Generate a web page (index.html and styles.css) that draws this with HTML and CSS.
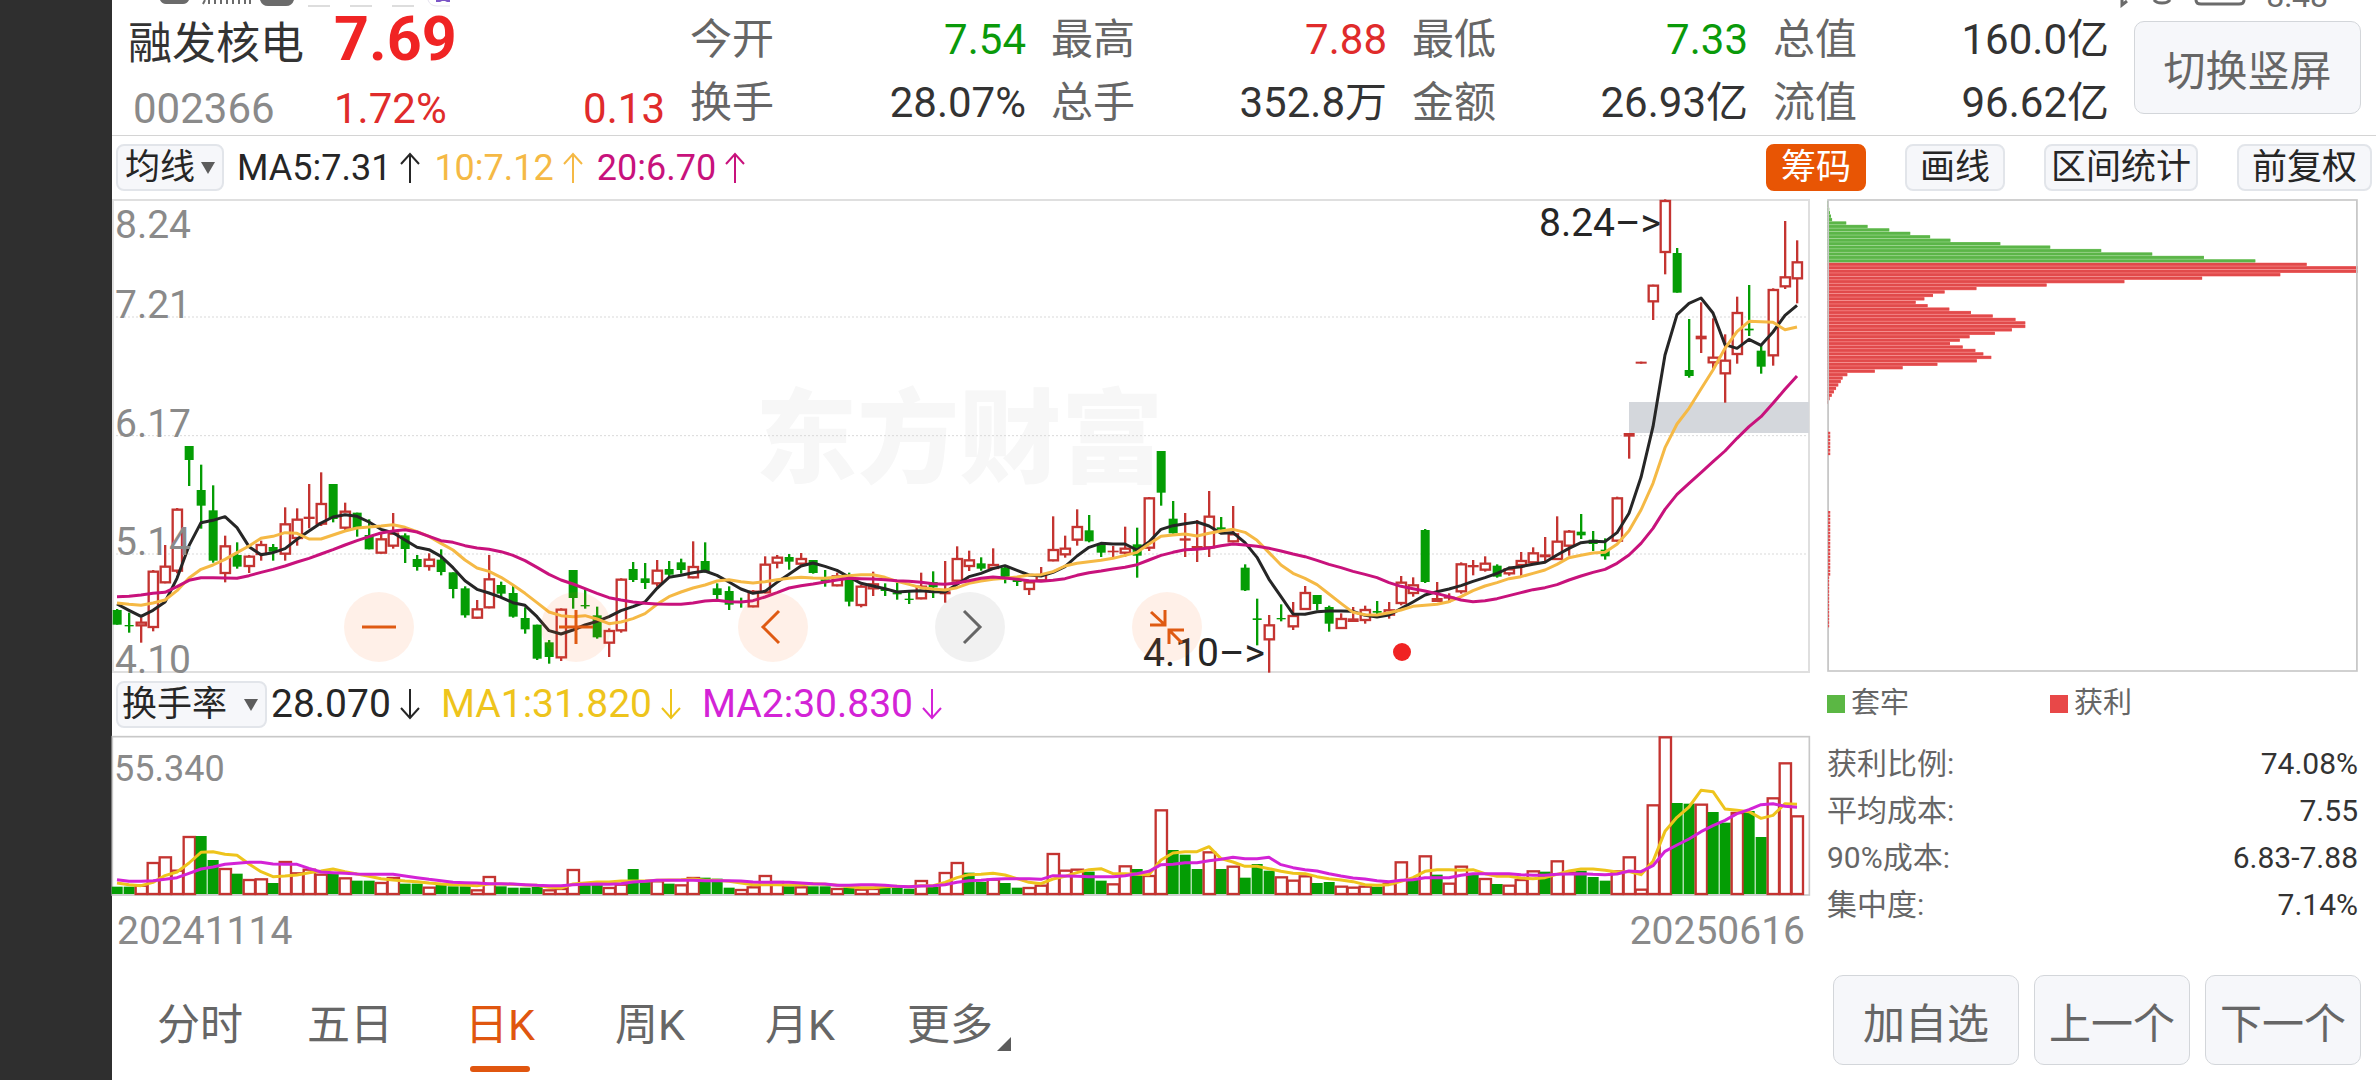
FILE: index.html
```html
<!DOCTYPE html>
<html lang="zh-CN">

<head>
    <meta charset="UTF-8">
    <meta name="viewport" content="width=device-width, initial-scale=1.0">
    <title>融发核电 002366</title>
    <link rel="stylesheet" href="styles.css">
</head>

<body>
    <div class="page">
        <!-- Phone status strip, mostly scrolled off -->
        <div class="status" aria-hidden="true">
            <svg class="status-left" viewBox="0 0 200 8">
                <path d="M0 0h29q-2 4-6 4h-17q-4 0-6-4z" fill="#6b6b6b" />
                <path d="M45 0l-2 4M49 0v4M55 0v4M61 0v4M67 0v4M73 0v4M79 0v4M85 0v4M90 0v4" stroke="#6b6b6b" stroke-width="2" fill="none" />
                <path d="M100 0h34q-2 6-8 6h-18q-6 0-8-6z" fill="#6b6b6b" />
                <path d="M148 6h22M190 6h10" stroke="#dddddd" stroke-width="2" />
            </svg>
            <svg class="status-app" viewBox="0 0 90 8">
                <path d="M0 6h12M32 6h22" stroke="#dddddd" stroke-width="2" />
                <path d="M68 0q2 6 9 6h13" stroke="#e6e3ee" stroke-width="1" fill="none" />
                <path d="M76 0h14v2h-3l-2-1h-3l-2 1h-4z" fill="#7b55c7" />
            </svg>
            <svg class="status-right" viewBox="0 0 126 8">
                <path d="M2 0v5l5-4M34 0q2 3 8 3q6 0 8-3M76 0q0 4 5 4h38q5 0 5-4" stroke="#6b6b6b" stroke-width="3" fill="none" />
            </svg>
            <span class="status-time">8:48</span>
        </div>

        <!-- Quote header -->
        <header class="quote">
            <div class="stock">
                <h1 class="stock-name">融发核电</h1>
                <span class="stock-price">7.69</span>
                <span class="stock-code">002366</span>
                <span class="stock-change"><span>1.72%</span><span>0.13</span></span>
            </div>
            <dl class="quote-col">
                <div><dt>今开</dt><dd class="down">7.54</dd></div>
                <div><dt>换手</dt><dd>28.07%</dd></div>
            </dl>
            <dl class="quote-col">
                <div><dt>最高</dt><dd class="up">7.88</dd></div>
                <div><dt>总手</dt><dd>352.8万</dd></div>
            </dl>
            <dl class="quote-col">
                <div><dt>最低</dt><dd class="down">7.33</dd></div>
                <div><dt>金额</dt><dd>26.93亿</dd></div>
            </dl>
            <dl class="quote-col">
                <div><dt>总值</dt><dd>160.0亿</dd></div>
                <div><dt>流值</dt><dd>96.62亿</dd></div>
            </dl>
            <button class="btn btn-rotate" type="button">切换竖屏</button>
        </header>

        <!-- Moving averages and chart tools -->
        <div class="toolbar">
            <label class="picker picker-ma">
                <select aria-label="主图指标">
                    <option>均线</option>
                </select>
            </label>
            <div class="readout">
                <span class="ma5">MA5:7.31<svg class="arrow" viewBox="0 0 20 32"><path d="M10 31V2M1 12L10 2L19 12" /></svg></span>
                <span class="ma10">10:7.12<svg class="arrow" viewBox="0 0 20 32"><path d="M10 31V2M1 12L10 2L19 12" /></svg></span>
                <span class="ma20">20:6.70<svg class="arrow" viewBox="0 0 20 32"><path d="M10 31V2M1 12L10 2L19 12" /></svg></span>
            </div>
            <div class="tools">
                <button class="tool active" type="button">筹码</button>
                <button class="tool" type="button">画线</button>
                <button class="tool tool-range" type="button">区间统计</button>
                <button class="tool" type="button">前复权</button>
            </div>
        </div>

        <main class="charts">
            <!-- Candlestick chart -->
            <section class="kline">
                <svg id="kline" class="plot" viewBox="0 -663 5094 1419"></svg>
                <div class="axis">
                    <div><span>8.24</span><span>7.21</span></div>
                    <div><span>6.17</span></div>
                    <div><span>5.14</span></div>
                    <div><span>4.10</span></div>
                </div>
                <div class="controls">
                    <button class="round" type="button" aria-label="缩小"><svg viewBox="0 0 70 70"><path d="M18 35h34" /></svg></button>
                    <button class="round" type="button" aria-label="放大"><svg viewBox="0 0 70 70"><path d="M18 35h34M35 18v34" /></svg></button>
                    <button class="round" type="button" aria-label="左移"><svg viewBox="0 0 70 70"><path d="M41 19L25 35L41 51" /></svg></button>
                    <button class="round disabled" type="button" aria-label="右移"><svg viewBox="0 0 70 70"><path d="M29 19L45 35L29 51" /></svg></button>
                    <button class="round" type="button" aria-label="收起"><svg viewBox="0 0 70 70"><path d="M19 20L32 32M33 18V33H18M50 51L38 39M37 52V38H52" /></svg></button>
                </div>
            </section>

            <!-- Chip distribution -->
            <svg id="chips" class="chips" viewBox="0 0 1468 1419" preserveAspectRatio="none"></svg>

            <!-- Turnover chart -->
            <section class="turnover">
                <div class="turnover-bar">
                    <label class="picker picker-turnover">
                        <select aria-label="副图指标">
                            <option>换手率</option>
                        </select>
                    </label>
                    <div class="readout readout-large">
                        <span class="ma5">28.070<svg class="arrow" viewBox="0 0 20 32"><path d="M10 1V30M1 20L10 30L19 20" /></svg></span>
                        <span class="vol1">MA1:31.820<svg class="arrow" viewBox="0 0 20 32"><path d="M10 1V30M1 20L10 30L19 20" /></svg></span>
                        <span class="vol2">MA2:30.830<svg class="arrow" viewBox="0 0 20 32"><path d="M10 1V30M1 20L10 30L19 20" /></svg></span>
                    </div>
                </div>
                <div class="volume">
                    <svg id="volume" class="plot" viewBox="0 199 5094 477"></svg>
                    <span class="volume-max">55.340</span>
                </div>
                <div class="dates"><span>20241114</span><span>20250616</span></div>
            </section>

            <section class="chip-info">
                <div class="legend">
                    <span class="trapped">套牢</span>
                    <span class="profit">获利</span>
                </div>
                <table class="chip-table">
                    <tr><th>获利比例:</th><td>74.08%</td></tr>
                    <tr><th>平均成本:</th><td>7.55</td></tr>
                    <tr><th>90%成本:</th><td>6.83-7.88</td></tr>
                    <tr><th>集中度:</th><td>7.14%</td></tr>
                </table>
            </section>
        </main>

        <!-- Period tabs and stock navigation -->
        <footer class="bottom">
            <nav class="tabs">
                <button class="tab" type="button">分时</button>
                <button class="tab" type="button">五日</button>
                <button class="tab active" type="button">日K</button>
                <button class="tab" type="button">周K</button>
                <button class="tab" type="button">月K</button>
                <button class="tab more" type="button">更多</button>
            </nav>
            <div class="stock-nav">
                <button class="btn btn-add" type="button">加自选</button>
                <button class="btn" type="button">上一个</button>
                <button class="btn" type="button">下一个</button>
            </div>
        </footer>
    </div>

    <script src="chart.js"></script>
</body>

</html>
```

FILE: styles.css
```css
* {
    box-sizing: border-box;
}

body {
    margin: 0;
    background-color: #2f2f2f;
    color: #333333;
    font-family: Roboto, "Noto Sans CJK SC", sans-serif;
    font-size: 42px;
}

button,
select {
    font-family: inherit;
    margin: 0;
    cursor: pointer;
}

.page {
    position: relative;
    min-height: 100vh;
    margin-left: 112px;
    background-color: #ffffff;
}

/* Clipped phone status strip */
.status {
    position: absolute;
    top: 0;
    left: 0;
    right: 0;
    height: 8px;
    padding: 0 48px;
    display: flex;
    align-items: flex-end;
    overflow: hidden;
    font-size: 32px;
    line-height: 24px;
    color: #6b6b6b;
}

.status svg {
    height: 8px;
    flex: none;
}

.status-left {
    width: 200px;
}

.status-app {
    width: 90px;
}

.status-right {
    width: 126px;
    margin-left: auto;
    margin-right: 20px;
}

/* Quote header */
.quote {
    display: grid;
    grid-template-columns: 537px repeat(4, 1fr) 227px;
    column-gap: 25px;
    height: 136px;
    padding: 8px 15px 0 16px;
    border-bottom: 1px solid #d4d4d4;
}

.stock {
    display: grid;
    grid-template-columns: 206px 1fr;
    grid-template-rows: 63px 63px;
    align-items: center;
}

.stock-name {
    margin: 0;
    font-size: 44px;
    font-weight: 400;
}

.stock-price {
    color: #f02424;
    font-size: 61px;
    font-weight: 700;
    line-height: 63px;
}

.stock-code {
    padding: 12px 0 0 5px;
    color: #8a8a8a;
}

.stock-change {
    display: flex;
    justify-content: space-between;
    padding-top: 12px;
    color: #e02b2b;
}

.quote-col {
    margin: 0;
}

.quote-col div {
    display: flex;
    justify-content: space-between;
    line-height: 63px;
}

.quote-col dt {
    color: #666666;
}

.quote-col dd {
    margin: 0;
}

.quote-col .up {
    color: #e02b2b;
}

.quote-col .down {
    color: #0a9a0a;
}

.btn {
    height: 90px;
    min-width: 156px;
    padding: 0;
    border: 1px solid #d3d6da;
    border-radius: 10px;
    background-color: #f6f7fa;
    color: #666666;
    font-size: 42px;
}

.btn-rotate {
    height: 93px;
    margin-top: 13px;
}

/* Toolbar */
.toolbar {
    display: flex;
    align-items: center;
    height: 63px;
    padding: 0 4px;
}

.picker {
    position: relative;
}

.picker select {
    display: block;
    width: 100%;
    height: 47px;
    padding: 0 0 0 7px;
    border: 2px solid #e2e5ea;
    border-radius: 8px;
    background-color: #f6f7fa;
    color: #262626;
    font-size: 35px;
    line-height: 43px;
    appearance: none;
}

.picker-ma {
    width: 108px;
}

.picker-turnover {
    width: 151px;
}

.picker-turnover select {
    padding-left: 4px;
}

/* Small triangle of the picker */
.picker::after {
    content: "";
    position: absolute;
    right: 9px;
    top: 18px;
    border: 7px solid transparent;
    border-top: 12px solid #5c5c5c;
    border-bottom: 0;
    pointer-events: none;
}

.readout {
    display: flex;
    gap: 14px;
    margin-left: 13px;
    font-size: 36px;
}

.readout span {
    display: flex;
    align-items: center;
    gap: 9px;
}

.readout-large {
    gap: 21px;
    margin-left: 4px;
    font-size: 39px;
}

.arrow {
    width: 20px;
    height: 32px;
    fill: none;
    stroke: currentColor;
    stroke-width: 2;
}

.ma5 {
    color: #262626;
}

.ma10 {
    color: #f5b945;
}

.ma20 {
    color: #c8127c;
}

.vol1 {
    color: #eec41c;
}

.vol2 {
    color: #d323d6;
}

.tools {
    display: flex;
    gap: 39px;
    margin-left: auto;
}

.tool {
    height: 47px;
    padding: 0 13px;
    border: 2px solid #e2e5ea;
    border-radius: 8px;
    background-color: #f6f7fa;
    color: #262626;
    font-size: 35px;
    line-height: 43px;
}

.tool-range {
    padding: 0 5px;
}

.tool.active {
    border-color: #e85504;
    background-color: #e85504;
    color: #ffffff;
}

/* Charts */
.charts {
    display: grid;
    grid-template-columns: 1fr 531px;
    column-gap: 17px;
    padding-right: 18px;
}

.kline,
.volume {
    position: relative;
}

.plot,
.chips {
    display: block;
    width: 100%;
}

.plot {
    overflow: visible;
}

.chips {
    height: 100%;
    aspect-ratio: 531 / 473;
}

.axis {
    position: absolute;
    inset: 0;
    display: grid;
    grid-template-rows: repeat(4, 1fr);
    padding-left: 3px;
    color: #8a8a8a;
    font-size: 39px;
    line-height: 24px;
    pointer-events: none;
}

.axis div {
    display: flex;
    flex-direction: column;
    justify-content: flex-end;
}

.axis div:first-child {
    justify-content: space-between;
    padding-top: 14px;
}

/* Floating zoom and pan buttons */
.controls {
    position: absolute;
    left: 232px;
    bottom: 10px;
    display: flex;
    gap: 127px;
}

.round {
    width: 70px;
    height: 70px;
    padding: 0;
    border: 0;
    border-radius: 50%;
    background-color: rgba(255, 110, 30, 0.1);
    color: #df5a12;
}

.round.disabled {
    background-color: rgba(60, 60, 60, 0.07);
    color: #666666;
}

.round svg {
    display: block;
    fill: none;
    stroke: currentColor;
    stroke-width: 3;
}

.turnover-bar {
    display: flex;
    align-items: center;
    height: 64px;
    padding-left: 4px;
}

.volume-max {
    position: absolute;
    left: 2px;
    top: 13px;
    color: #8a8a8a;
    font-size: 36px;
    line-height: 40px;
}

.dates {
    display: flex;
    justify-content: space-between;
    padding: 12px 5px 0 5px;
    color: #8a8a8a;
    font-size: 39px;
    line-height: 48px;
}

/* Chip distribution details */
.chip-info {
    color: #666666;
    font-size: 30px;
}

.legend {
    display: grid;
    grid-template-columns: 223px 1fr;
    margin-bottom: 5px;
    font-size: 29px;
    line-height: 63px;
}

.legend span {
    display: flex;
    align-items: center;
    gap: 6px;
}

.legend span::before {
    content: "";
    width: 18px;
    height: 18px;
    background-color: #5bb744;
}

.legend .profit::before {
    background-color: #e84848;
}

.chip-table {
    width: 100%;
    border-collapse: collapse;
    line-height: 47px;
}

.chip-table th {
    padding: 0;
    font-weight: 400;
    text-align: left;
}

.chip-table td {
    padding: 0;
    color: #333333;
    text-align: right;
}

/* Bottom bar */
.bottom {
    display: flex;
    justify-content: space-between;
    padding: 20px 15px 15px 13px;
}

.tabs {
    display: flex;
}

.tab {
    position: relative;
    width: 150px;
    height: 91px;
    padding: 0;
    border: 0;
    background: none;
    color: #666666;
    font-size: 43px;
}

.tab.active {
    color: #e0560f;
}

.tab.active::after {
    content: "";
    position: absolute;
    left: 45px;
    bottom: -6px;
    width: 60px;
    height: 6px;
    border-radius: 3px;
    background-color: #e0560f;
}

.tab.more::after {
    content: "";
    position: absolute;
    right: 14px;
    bottom: 15px;
    border-left: 14px solid transparent;
    border-bottom: 14px solid #5c5c5c;
}

.stock-nav {
    display: flex;
    gap: 15px;
}

.btn-add {
    width: 186px;
}

/* SVG chart parts */
.frame {
    fill: none;
    stroke: #dfdfdf;
    stroke-width: 6;
}

.frame-thin {
    fill: none;
    stroke: #c8c8c8;
    stroke-width: 5;
}

.grid-line {
    stroke: #d9d9d9;
    stroke-width: 3;
    stroke-dasharray: 6 6;
}

.watermark {
    fill: #f7f7f7;
    font-size: 306px;
    font-weight: 900;
    font-family: "Noto Sans CJK SC", sans-serif;
}

.gap-band {
    fill: #d4d7dc;
}

.up-bar {
    fill: #ffffff;
    stroke: #c43431;
    stroke-width: 7;
}

.up-fill,
.up-wick {
    fill: #c43431;
}

.down-fill {
    fill: #049d04;
}

.line {
    fill: none;
    stroke: currentColor;
    stroke-width: 9;
    stroke-linejoin: round;
}

.mark {
    fill: #262626;
    font-size: 117px;
    text-anchor: end;
}

.dot {
    fill: #f02323;
}

.chip-up {
    fill: #e14a4b;
}

.chip-down {
    fill: #5bb548;
}

.chip-up-back {
    fill: #f77e7e;
}

.chip-down-back {
    fill: #8fd07f;
}
```

FILE: chart.js
```js
const NS = 'http://www.w3.org/2000/svg';
const STEP = 36; // distance between two trading days
const FIRST = 15; // centre of the first day

// One candle per day: colour, high, body top, body bottom, low
const candles = `
g567,570,614,614 g578,615,619,638 r592,605,619,668 r450,452,624,634 r375,437,490,490 r264,266,455,460
g78,78,120,198 g134,210,257,326 g196,271,422,428 r347,376,462,487 g367,405,440,446 r405,407,441,459
r362,372,405,422 g372,381,395,422 r262,310,404,422 r265,296,357,377 r192,290,297,325 r157,249,314,318
g192,192,297,307 r248,272,326,330 g278,278,325,350 g298,345,388,388 r340,355,401,401 r279,338,380,386
g340,346,387,429 g405,417,441,452 r400,416,441,452 g388,419,456,466 g457,457,507,535 g499,505,586,593
r540,565,596,596 r405,475,565,565 g485,495,521,532 g497,519,590,593 g562,594,628,641 g614,614,716,720
g660,667,711,731 r565,566,715,723 g450,450,534,566 g510,555,559,566 g560,586,652,656 r625,630,671,711
r475,476,634,638 g426,447,480,486 g429,475,489,507 r420,449,493,500 g423,447,464,468 g416,427,450,461
r364,438,475,475 g367,423,457,457 g490,505,525,538 g499,513,554,570 g533,545,549,563 r510,512,562,562
r409,431,520,520 r405,410,431,445 g402,411,425,449 r399,414,434,436 g420,420,459,461 g450,478,484,500
r458,466,499,499 g458,480,545,559 r495,497,558,562 r455,490,508,528 g490,507,513,528 g488,517,523,539
g516,536,540,552 r458,497,538,538 g454,486,502,534 r423,514,523,548 r379,414,485,490 r392,418,441,453
g412,430,446,452 r385,432,447,450 g438,443,475,490 g470,480,486,498 r480,484,510,525 r441,462,484,486
r289,387,424,424 r347,383,406,413 r268,318,362,377 g285,331,364,367 g375,375,398,411 r378,392,397,411
r320,383,401,410 g323,373,407,473 r231,232,386,393 g93,93,218,257 g243,296,340,341 r279,355,362,411
r300,378,389,426 r213,287,385,411 g291,322,329,340 r258,340,367,367 g433,443,511,513 g536,595,600,676
r585,613,661,758 g553,594,598,604 r546,585,622,630 r498,516,570,570 g525,525,552,571 g557,561,611,635
r580,594,627,627 r561,595,606,606 r557,567,603,611 g543,573,578,585 r546,568,587,596 r468,485,552,556
r472,493,522,530 g327,330,486,489 r486,534,546,546 r520,530,536,549 r427,430,517,521 r420,435,442,466
r409,428,452,455 g433,437,470,473 r440,445,463,467 r396,420,438,470 r382,397,430,430 r351,403,412,428
r289,362,420,420 r330,332,380,407 g282,335,346,357 g333,359,372,393 g355,389,409,419 r230,232,365,365
r39,39,50,116 r-175,-175,-169,-169 r-406,-406,-353,-300 r-662,-660,-501,-437 g-516,-501,-382,-382 g-303,-150,-132,-127
r-353,-253,-242,-201 r-305,-190,-170,-154 r-257,-181,-137,-52 r-370,-324,-195,-169 g-405,-274,-269,-252 g-223,-208,-160,-139
r-395,-393,-191,-163 r-597,-431,-398,-393 r-539,-476,-422,-350`.trim().split(/\s+/);

const ma5 = [552, 571, 589, 571, 546, 475, 377, 308, 301, 290, 323, 380, 404, 398, 386, 358, 333, 309, 291, 284, 289, 306, 328, 338,
    360, 382, 389, 409, 443, 482, 508, 519, 532, 548, 556, 590, 632, 642, 630, 615, 604, 590, 572, 560, 546, 505, 472, 466,
    458, 453, 466, 486, 507, 520, 514, 487, 463, 438, 429, 439, 451, 471, 490, 498, 506, 516, 514, 512, 515, 516, 493, 470,
    460, 446, 437, 451, 465, 468, 457, 440, 408, 382, 370, 372, 372, 390, 366, 328, 317, 311, 306, 318, 340, 338, 368, 412,
    478, 530, 582, 583, 575, 573, 573, 574, 586, 591, 585, 566, 546, 525, 515, 507, 497, 484, 473, 460, 444, 440, 433, 427,
    405, 385, 368, 364, 365, 338, 280, 172, 20, -195, -316, -350, -366, -321, -226, -215, -242, -224, -264, -314, -344];

const ma10 = [549, 553, 556, 549, 540, 512, 474, 448, 435, 418, 398, 378, 355, 349, 338, 340, 357, 357, 345, 333, 324, 321, 318, 314,
    322, 335, 349, 370, 390, 420, 444, 454, 472, 495, 520, 548, 576, 587, 590, 587, 597, 611, 606, 596, 581, 553, 530, 516,
    504, 495, 483, 479, 485, 489, 485, 479, 475, 472, 474, 475, 471, 467, 464, 464, 472, 484, 493, 503, 507, 510, 503, 490,
    483, 478, 475, 471, 465, 464, 455, 438, 430, 425, 421, 415, 406, 397, 372, 349, 345, 342, 348, 340, 333, 328, 337, 361,
    398, 435, 460, 475, 494, 522, 550, 577, 584, 585, 578, 570, 559, 556, 553, 545, 530, 512, 498, 488, 476, 470, 460, 450,
    433, 413, 406, 399, 397, 373, 332, 270, 190, 83, 12, -35, -93, -150, -215, -265, -296, -295, -293, -271, -279];

const ma20 = [530, 529, 525, 520, 517, 500, 481, 473, 473, 474, 475, 467, 457, 448, 438, 426, 415, 402, 389, 375, 362, 350, 339, 333,
    329, 336, 349, 362, 367, 377, 384, 388, 395, 406, 422, 442, 463, 480, 492, 506, 520, 533, 540, 546, 550, 552, 553, 553,
    549, 543, 541, 545, 546, 542, 531, 518, 504, 497, 492, 486, 480, 475, 476, 477, 479, 482, 484, 487, 491, 493, 489, 482,
    475, 471, 474, 478, 482, 484, 481, 476, 466, 458, 453, 447, 442, 434, 420, 406, 397, 389, 388, 384, 377, 372, 375, 379,
    385, 393, 402, 410, 421, 433, 443, 454, 463, 473, 488, 499, 506, 513, 521, 530, 540, 545, 542, 536, 527, 518, 509, 503,
    494, 480, 468, 457, 448, 430, 405, 370, 325, 268, 223, 190, 158, 125, 93, 55, 20, -10, -50, -92, -132];

// Turnover bars: colour and top
const bars = `
g651 g651 r645 r577 r560 r600 r499 g499 g571 r595 g612 r628 r626 g640 r574 r608 r597 r612 g607 r623 g633 g633 r637 r622
g642 g642 r651 g646 g650 g650 r659 r619 g650 g654 g654 g652 r659 r655 r598 g645 g645 r652 r642 g598 g637 r632 g642 r644
r622 g624 g627 g654 r658 r650 r616 r634 g650 r650 g650 g650 r655 g654 r657 r655 g655 g655 g657 r631 g652 r607 r577 g609
g637 r627 g640 g654 r652 r645 r550 r600 r597 g606 g633 r641 r587 g598 r616 r419 g541 g555 g598 r545 g598 r588 g624 g583
g603 r620 r630 r617 g640 g637 r648 r651 r648 g651 r640 r575 g627 r557 g615 r639 r588 g610 r625 g643 r645 r628 r602 g606
r572 r606 g603 g622 g633 r602 r560 r657 r404 r200 g400 g402 r402 g427 g459 r427 g424 g502 r383 r278 r437`.trim().split(/\s+/);

const vol1 = [640, 645, 648, 638, 618, 607, 580, 548, 546, 554, 557, 583, 606, 621, 619, 616, 609, 604, 598, 606, 613, 620, 627, 631,
    634, 636, 640, 643, 645, 646, 648, 643, 643, 644, 646, 647, 653, 655, 643, 640, 637, 637, 634, 634, 634, 632, 631, 630,
    628, 632, 632, 635, 640, 645, 645, 645, 646, 645, 642, 644, 647, 651, 654, 654, 651, 650, 651, 648, 648, 638, 624, 615,
    614, 611, 616, 627, 638, 642, 628, 620, 609, 600, 597, 612, 612, 614, 615, 571, 550, 546, 546, 531, 567, 577, 590, 590,
    597, 605, 611, 612, 621, 627, 631, 636, 645, 647, 645, 635, 624, 605, 600, 600, 602, 600, 612, 620, 620, 625, 627, 624,
    614, 604, 598, 598, 602, 607, 606, 615, 575, 485, 443, 412, 362, 366, 418, 422, 426, 446, 437, 402, 404];

const vol2 = [630, 635, 635, 633, 629, 624, 611, 598, 592, 584, 581, 578, 578, 583, 584, 584, 596, 607, 609, 611, 613, 614, 614, 614,
    619, 624, 629, 633, 638, 639, 640, 642, 642, 643, 645, 647, 648, 648, 645, 644, 643, 644, 642, 637, 635, 632, 632, 632,
    632, 633, 633, 633, 634, 637, 638, 638, 638, 640, 642, 643, 647, 647, 645, 645, 647, 650, 651, 649, 648, 645, 638, 633,
    632, 629, 627, 627, 627, 629, 618, 619, 620, 621, 621, 621, 618, 612, 605, 585, 584, 579, 579, 573, 569, 563, 567, 567,
    563, 585, 594, 600, 604, 612, 619, 625, 628, 633, 636, 632, 630, 624, 624, 624, 617, 612, 612, 612, 612, 615, 617, 617,
    614, 613, 612, 614, 615, 613, 604, 606, 588, 545, 526, 508, 486, 468, 452, 432, 420, 405, 402, 410, 413];

// Chip distribution, one width per price level
const chipsDown = [2, 4, 6, 8, 11, 14, 53, 112, 172, 230, 285, 341, 479, 617, 758, 899, 1042, 1184];
const chipsUp = [1326, 1468, 1468, 1253, 1037, 822, 607, 413, 325, 293, 269, 245, 278, 338, 398, 458, 521, 548, 548, 511, 464, 394,
    367, 340, 375, 410, 432, 454, 414, 305, 209, 132, 56, 43, 38, 31, 25, 19, 13, 7, 3];

function add(parent, tag, cls, attrs, text) {
    const el = document.createElementNS(NS, tag);
    el.setAttribute('class', cls);
    for (const key in attrs) {
        el.setAttribute(key, attrs[key]);
    }
    if (text) {
        el.textContent = text;
    }
    parent.appendChild(el);
    return el;
}

function rect(parent, cls, x, y, width, height) {
    add(parent, 'rect', cls, { x, y, width, height });
}

function drawLine(parent, cls, values) {
    const points = values.map((y, i) => `${FIRST + i * STEP},${y}`).join(' ');
    add(parent, 'polyline', 'line ' + cls, { points });
}

function drawKline() {
    const svg = document.getElementById('kline');
    add(svg, 'text', 'watermark', { x: 1930, y: 165 }, '东方财富');
    [-309, 47, 402].forEach(y => add(svg, 'line', 'grid-line', { x1: 0, x2: 5094, y1: y, y2: y }));
    rect(svg, 'frame', 3, -660, 5088, 1416);
    rect(svg, 'gap-band', 4551, -54, 540, 93);

    candles.forEach((item, i) => {
        const x = FIRST + i * STEP;
        const [high, top, bottom, low] = item.slice(1).split(',').map(Number);
        const up = item[0] === 'r';
        const height = bottom - top;
        if (low > high) {
            rect(svg, up ? 'up-wick' : 'down-fill', x - 3, high, 7, low - high);
        }
        if (!up) {
            rect(svg, 'down-fill', x - 13, top, 27, height);
        } else if (height > 12) {
            rect(svg, 'up-bar', x - 13, top + 3, 28, height - 6);
        } else {
            rect(svg, 'up-fill', x - 16, top, 33, height);
        }
    });

    drawLine(svg, 'ma5', ma5);
    drawLine(svg, 'ma10', ma10);
    drawLine(svg, 'ma20', ma20);
    add(svg, 'text', 'mark', { x: 4647, y: -551 }, '8.24–>');
    add(svg, 'text', 'mark', { x: 3459, y: 738 }, '4.10–>');
    add(svg, 'circle', 'dot', { cx: 3870, cy: 696, r: 27 });
}

function drawVolume() {
    const svg = document.getElementById('volume');
    const base = 676;
    rect(svg, 'frame-thin', 1, 201, 5091, 475);
    bars.forEach((item, i) => {
        const x = FIRST + i * STEP;
        const top = Number(item.slice(1));
        if (item[0] === 'r') {
            rect(svg, 'up-bar', x - 16, top + 3, 34, base - top - 6);
        } else {
            rect(svg, 'down-fill', x - 16, top, 33, base - top - 3);
        }
    });
    drawLine(svg, 'vol1', vol1);
    drawLine(svg, 'vol2', vol2);
}

function drawChips() {
    const svg = document.getElementById('chips');
    const row = 31 / 3;
    const draw = (cls, width, k) => {
        rect(svg, cls + '-back', 0, 5 + k * row, width, row);
        rect(svg, cls, 0, 6 + k * row, width, 8);
    };
    chipsDown.forEach((width, k) => draw('chip-down', width, k));
    chipsUp.forEach((width, k) => draw('chip-up', width, k + chipsDown.length));
    rect(svg, 'frame-thin', 3, 3, 1462, 1413);
    // Thin layers of older chips
    for (let k = 67; k < 124; k++) {
        if (k < 74 || k > 89) {
            rect(svg, 'chip-up', 3, 6 + k * row, k > 108 ? 3 : 6, 8);
        }
    }
}

drawKline();
drawVolume();
drawChips();
```
